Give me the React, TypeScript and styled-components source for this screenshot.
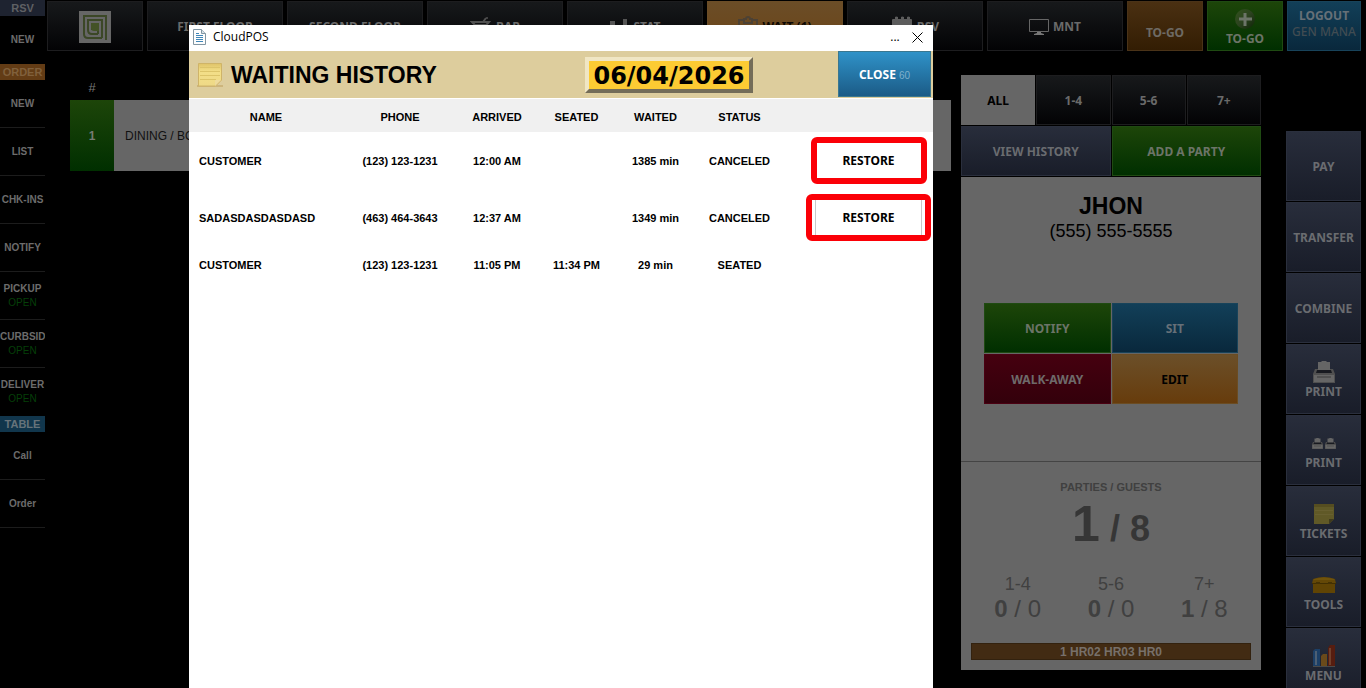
import React from "react";
import styled, { createGlobalStyle } from "styled-components";

const SANS = '"Liberation Sans", Arial, sans-serif';
const UI = '"Noto Sans", Tahoma, sans-serif';

type Tone = "black" | "slate" | "green" | "blue" | "brown" | "amber" | "red" | "plain" | "tan";

const tones: Record<Tone, { bg: string; border: string; color: string }> = {
  black: { bg: "linear-gradient(#17191b, #030305)", border: "#1d1d1f", color: "#6a6a6a" },
  slate: { bg: "linear-gradient(#282d3b, #191d29)", border: "#2a2f3d", color: "#6a6c70" },
  green: { bg: "linear-gradient(#1d4509, #002f00)", border: "#1f4a12", color: "#6c7468" },
  blue: { bg: "linear-gradient(#123f58, #09283c)", border: "#18435a", color: "#667078" },
  brown: { bg: "linear-gradient(#4a3012, #331d03)", border: "#4a3318", color: "#6e6a64" },
  tan: { bg: "linear-gradient(#6b4d27, #6b4417)", border: "#6b4d27", color: "#0c0804" },
  amber: { bg: "linear-gradient(#6b4f29, #673c0c)", border: "#6b4c22", color: "#000" },
  red: { bg: "linear-gradient(#45000f, #33000b)", border: "#4a0012", color: "#6e6a6a" },
  plain: { bg: "#666", border: "#666", color: "#000" },
};

const GlobalStyle = createGlobalStyle`
  *, *::before, *::after { box-sizing: border-box; }
  html, body { margin: 0; background: #000; overflow: hidden; }
  h1, h2, p { margin: 0; }
  button { font: inherit; cursor: pointer; padding: 0; }
`;

const Shell = styled.div`
  position: relative;
  display: flex;
  height: 100vh;
  overflow: hidden;
  background: #000;
  font-family: ${SANS};
`;

const LeftRail = styled.nav`
  flex: 0 0 45px;
  overflow: hidden;
  margin-right: 2px;
`;

const RailHeading = styled.h2<{ $bg: string; $color: string }>`
  height: 16px;
  background: ${(p) => p.$bg};
  color: ${(p) => p.$color};
  font: bold 11px/16px ${SANS};
  text-align: center;
`;

const RailItem = styled.button<{ $last: boolean }>`
  display: block;
  width: 100%;
  height: 48px;
  border: 0;
  border-bottom: 1px solid ${(p) => (p.$last ? "transparent" : "#1c1c1c")};
  background: none;
  color: #6c6c6c;
  font: bold 10px/14px ${SANS};
  text-align: center;
  white-space: nowrap;
`;

const RailStatus = styled.span`
  display: block;
  color: #053f08;
  font-weight: normal;
`;

const Workspace = styled.div`
  flex: 1;
  min-width: 0;
  padding: 1px 5px 0 0;
`;

const TopBar = styled.header`
  display: grid;
  grid-template-columns: 96px repeat(7, 1fr) 76px 76px 74px;
  grid-auto-rows: 50px;
  gap: 4px;
`;

const Tile = styled.button<{ $tone: Tone; $stack?: boolean }>`
  display: flex;
  flex-direction: ${(p) => (p.$stack ? "column" : "row")};
  align-items: center;
  justify-content: center;
  gap: ${(p) => (p.$stack ? "2px" : "4px")};
  min-width: 0;
  padding-top: 2px;
  border: 1px solid ${(p) => tones[p.$tone].border};
  background: ${(p) => tones[p.$tone].bg};
  color: ${(p) => tones[p.$tone].color};
  font: bold 12px/14px ${UI};
  white-space: nowrap;
`;

const LowTile = styled(Tile)`
  padding-top: 14px;
`;

const UserTile = styled(Tile)`
  padding: 0 0 4px;
`;

const UserName = styled.span`
  color: #414c52;
  font-weight: 500;
`;

const TileIcon = styled.span`
  display: grid;
  grid-auto-flow: column;
  place-content: center;
  gap: 2px;
  height: 22px;
`;

const Content = styled.div`
  display: flex;
  align-items: flex-start;
  padding-left: 23px;
`;

const WaitList = styled.table`
  flex: 1;
  border-collapse: collapse;
  margin: 24px 10px 0 0;
  font: 12px/16px ${SANS};

  th {
    height: 25px;
    padding: 0;
    color: #777;
    font-size: 13px;
    font-weight: normal;
  }
  td {
    height: 71px;
    padding: 0 11px;
    background: #666;
    color: #111;
  }
  td:first-child {
    width: 44px;
    padding: 0;
    background: linear-gradient(#1d4509, #002f00);
    color: #767c72;
    font-weight: bold;
    text-align: center;
  }
`;

const Panel = styled.section`
  flex: 0 0 300px;
  margin: 24px 25px 0 0;
`;

const PanelButtons = styled.div`
  display: grid;
  grid-template-columns: repeat(4, 1fr);
  grid-auto-rows: 50px;
  gap: 1px;
  margin-bottom: 1px;
`;

const WideTile = styled(Tile)`
  grid-column: span 2;
`;

const Card = styled.div`
  background: #666;
  text-align: center;
`;

const Party = styled.div`
  padding: 15px 23px 57px;
  border-bottom: 1px solid #444;
`;

const PartyName = styled.h2`
  font: bold 23px/28px ${SANS};
  color: #000;
`;

const PartyPhone = styled.p`
  font-size: 18px;
  line-height: 22px;
`;

const PartyActions = styled.div`
  display: grid;
  grid-template-columns: 1fr 1fr;
  grid-auto-rows: 50px;
  gap: 1px;
  margin-top: 61px;
`;

const Totals = styled.div`
  padding: 17px 10px 10px;
  color: #404040;
`;

const TotalsLabel = styled.p`
  font-size: 11px;
  font-weight: bold;
  line-height: 16px;
`;

const TotalsValue = styled.p`
  margin-top: 4px;
  font-size: 50px;
  font-weight: bold;
  line-height: 50px;
  color: #363636;

  span {
    font-size: 36px;
    line-height: 36px;
  }
`;

const Groups = styled.div`
  display: grid;
  grid-template-columns: repeat(3, 1fr);
  margin: 23px 0 21px;
`;

const GroupLabel = styled.p`
  font-size: 18px;
  line-height: 24px;
`;

const GroupValue = styled.p`
  font-size: 24px;
  line-height: 26px;
`;

const HoursBar = styled.p`
  height: 17px;
  border: 1px solid #33220f;
  background: #422b13;
  color: #77706a;
  font-size: 12px;
  font-weight: bold;
  line-height: 16px;
`;

const ActionRail = styled.nav`
  flex: 0 0 75px;
  display: grid;
  grid-auto-rows: 70px;
  gap: 1px;
  margin-top: 80px;
`;

const Overlay = styled.div`
  position: absolute;
  inset: 0;
  display: flex;
  padding: 25px 433px 0 189px;
`;

const Dialog = styled.section`
  flex: 1;
  min-width: 0;
  background: #fff;
  color: #000;
`;

const TitleBar = styled.div`
  display: flex;
  align-items: center;
  height: 26px;
  padding: 0 8px 2px 4px;
  font: 12px/24px "Open Sans", "Segoe UI", sans-serif;

  h1 {
    flex: 1;
    margin-left: 7px;
    font: inherit;
  }
`;

const WindowButton = styled.button`
  display: grid;
  place-items: center;
  width: 16px;
  height: 24px;
  margin-left: 6px;
  border: 0;
  background: none;
`;

const Banner = styled.div`
  display: flex;
  align-items: center;
  height: 47px;
  margin-bottom: 1px;
  padding: 0 2px 0 8px;
  background: #ddcd9d;
`;

const Heading = styled.h2`
  width: 354px;
  margin-left: 8px;
  padding-top: 1px;
  font: bold 23px/28px ${SANS};
`;

const DateButton = styled.button`
  width: 168px;
  height: 36px;
  padding-top: 2px;
  border: 4px solid;
  border-color: #f0e6c4 #746d58 #746d58 #f0e6c4;
  background: #fccb33;
  color: #000;
  font: bold 24px/26px "DejaVu Sans", Verdana, sans-serif;
  white-space: nowrap;
`;

const CloseButton = styled.button`
  width: 93px;
  height: 46px;
  margin: 0 0 1px auto;
  padding-top: 2px;
  border: 1px solid #3a7790;
  background: linear-gradient(#2f92c8, #1b5b86);
  color: #fff;
  font: bold 12px/16px ${UI};

  small {
    color: #7fb0cc;
    font: 10px/16px ${SANS};
  }
`;

const History = styled.table`
  width: 100%;
  table-layout: fixed;
  border-collapse: collapse;
  font: bold 11px/14px ${SANS};
  text-align: center;

  th, td { padding: 0; }
  th {
    height: 33px;
    padding-top: 2px;
    background: #f0f0f0;
  }
  td:first-child {
    padding-left: 10px;
    text-align: left;
  }
  td:last-child { padding-left: 20px; }
`;

const HistoryRow = styled.tr<{ $tall: boolean }>`
  height: ${(p) => (p.$tall ? 57 : 37)}px;
`;

const Highlight = styled.div<{ $wide: boolean }>`
  display: flex;
  justify-content: center;
  width: ${(p) => (p.$wide ? 125 : 116)}px;
  height: 47px;
  margin: 0 auto;
  border: 6px solid #fb0007;
  border-radius: 6px;
  background: #fff;
`;

const RestoreButton = styled.button<{ $edged: boolean }>`
  width: 107px;
  padding-top: 1px;
  border: solid ${(p) => (p.$edged ? "#c8c8c8" : "transparent")};
  border-width: 0 1px;
  background: #fff;
  color: #000;
  font: bold 12px/14px ${UI};
`;

const SpiralLogo = () => (
  <svg width="32" height="32" viewBox="0 0 32 32" aria-hidden="true">
    <path fill="#666" d="M0 0h32v32H0z" />
    <g fill="none" stroke="#3b4726" strokeWidth="2">
      <path d="M27 29V5H5v18q0 4 4 4h14" />
      <path d="M23 27V9H9v10q0 4 4 4h6" />
      <path d="M19 23V13h-6v6" />
    </g>
    <path fill="#435226" d="M12 12h8v8h-5q-3 0-3-3z" />
  </svg>
);

const CocktailIcon = () => (
  <svg width="22" height="22" viewBox="0 0 22 22" aria-hidden="true" fill="none" stroke="#505050" strokeWidth="2">
    <path d="M2 6h17l-8 9zM10 14v7M6 21h9" />
    <path d="M5 9h11M13 6l3-4" />
    <circle cx="17" cy="2" r="1" fill="#505050" stroke="none" />
  </svg>
);

const BarsIcon = () => (
  <svg width="20" height="20" viewBox="0 0 20 20" aria-hidden="true" fill="#555">
    <path d="M1 4h5v15H1zM8 8h4v11H8zM14 2h4v17h-4z" />
  </svg>
);

const ClipboardIcon = () => (
  <svg width="20" height="22" viewBox="0 0 20 22" aria-hidden="true" fill="none" stroke="#4c4134" strokeWidth="2">
    <path d="M6 4H1v17h18V4h-5M6 3h2a2 2 0 0 1 4 0h2v4H6zM6 13l3 3 5-6" />
  </svg>
);

const CalendarIcon = () => (
  <svg width="22" height="22" viewBox="0 0 22 22" aria-hidden="true" fill="#5c5c5c">
    <path d="M1 4q0-1 1-1h2V1q1-1 3 0v2h3V1q1-1 3 0v2h3V1q1-1 3 0v2h1q1 0 1 1v5H1zM1 10h20v12H1z" />
  </svg>
);

const MonitorIcon = () => (
  <svg width="20" height="16" viewBox="0 0 20 16" aria-hidden="true">
    <path fill="none" stroke="#666" d="M.5.5h19v12H.5z" />
    <path fill="#777" d="M8 13h4v1l3 1v1H5v-1l3-1z" />
  </svg>
);

const PlusIcon = () => (
  <svg width="20" height="20" viewBox="0 0 20 20" aria-hidden="true">
    <defs>
      <linearGradient id="plusBall" x2="1" y2="1">
        <stop offset="0" stopColor="#31521c" />
        <stop offset=".5" stopColor="#2c421f" />
        <stop offset="1" stopColor="#0e2406" />
      </linearGradient>
    </defs>
    <circle cx="10" cy="10" r="10" fill="url(#plusBall)" />
    <path stroke="#6c7468" strokeWidth="3" d="M10 4v13M4 10h13" />
  </svg>
);

const PrinterIcon = ({ size = 22 }: { size?: number }) => (
  <svg width={size} height={size} viewBox="0 0 22 22" aria-hidden="true">
    <path fill="#656565" d="M5 1h3l1-1h4l1 1h3v9H5z" />
    <path fill="#505050" d="M2 8h3v2h12V8h3l2 5v9H0v-9z" />
    <path fill="#181a20" d="M4 9h14l1 3H3z" />
    <path fill="#666" d="M1 14h20v7H1z" />
    <path fill="#505050" d="M4 15h14v2H4z" />
  </svg>
);

const NoteIcon = () => (
  <svg width="26" height="26" viewBox="0 0 26 26" aria-hidden="true">
    <defs>
      <linearGradient id="notePaper" x2="0" y2="1">
        <stop offset="0" stopColor="#dfc368" />
        <stop offset=".35" stopColor="#f3df88" />
        <stop offset="1" stopColor="#eed987" />
      </linearGradient>
    </defs>
    <path fill="#cdb57c" d="M0 23h26v2H0z" />
    <path fill="url(#notePaper)" stroke="#cfb468" d="M1.500 1.500h23V18l-6 6h-17z" />
    <path fill="none" stroke="#dcc46a" d="M3 5.500h20M3 9.500h20M3 13.500h20M3 17.500h16" />
    <path fill="#d8bb76" d="M18 25v-7h7z" />
    <path fill="#eedb9c" d="M18 24v-6h6z" />
  </svg>
);

const TicketIcon = () => (
  <svg width="20" height="20" viewBox="0 0 20 20" aria-hidden="true">
    <path fill="#605927" d="M0 0h20v15l-5 5H0z" />
    <path fill="#554d20" d="M0 0h20v3H0z" />
    <path fill="none" stroke="#686030" d="M1 6.500h18M1 10.500h18" />
    <path fill="#3f3a1c" d="M15 20v-5h5z" />
  </svg>
);

const ToolboxIcon = () => (
  <svg width="24" height="16" viewBox="0 0 24 16" aria-hidden="true">
    <path fill="#644807" d="M1 2q11-4 22 0l1 5H0z" />
    <path fill="#70530b" d="M2 2q10-3 20 0v1H2z" />
    <path fill="#604404" d="M1 7h22v9H1z" />
    <path stroke="#412f02" d="M0 6.500h24" />
    <path fill="#453204" d="M4 5h4v2H4zM16 5h4v2h-4z" />
  </svg>
);

const ChartIcon = () => (
  <svg width="22" height="22" viewBox="0 0 22 22" aria-hidden="true">
    <path fill="#1c3f66" d="M0 6l2-2h5v17H0z" />
    <path fill="#4d5f73" d="M2 6h2v14H2z" />
    <path fill="#6a4a1a" d="M8 11l2-2h4v12H8z" />
    <path fill="#561d10" d="M15 3l2-3h5v21h-7z" />
    <path fill="#70402c" d="M16 3h2v17h-2z" />
    <path fill="#4a4a4a" d="M0 21h22v1H0z" />
  </svg>
);

const DocumentIcon = () => (
  <svg width="13" height="16" viewBox="0 0 13 16" aria-hidden="true">
    <path fill="#fdfdfd" stroke="#8296a3" d="M.5.5h8l4 4v11H.5z" />
    <path fill="#d7e1e7" stroke="#8296a3" d="M8.500.5v4h4" />
    <path stroke="#3f86b8" d="M3 4.500h3M3 6.500h7M3 8.500h7M3 10.500h7M3 12.500h7" />
  </svg>
);

const CrossIcon = () => (
  <svg width="11" height="11" viewBox="0 0 11 11" aria-hidden="true">
    <path stroke="#000" d="M.5.5l10 10M10.500.5l-10 10" />
  </svg>
);

const railGroups = [
  { title: "RSV", bg: "#1e2330", color: "#5f6064", items: [["NEW"]] },
  {
    title: "ORDER",
    bg: "#633c15",
    color: "#80603c",
    items: [["NEW"], ["LIST"], ["CHK-INS"], ["NOTIFY"], ["PICKUP", "OPEN"], ["CURBSID", "OPEN"], ["DELIVER", "OPEN"]],
  },
  { title: "TABLE", bg: "#11364c", color: "#66737a", items: [["Call"], ["Order"]] },
];

const columns = ["NAME", "PHONE", "ARRIVED", "SEATED", "WAITED", "STATUS", ""];
const columnWidths = [154, 114, 80, 79, 79, 89];

const history = [
  { name: "CUSTOMER", phone: "(123) 123-1231", arrived: "12:00 AM", seated: "", waited: "1385 min", status: "CANCELED" },
  { name: "SADASDASDASDASD", phone: "(463) 464-3643", arrived: "12:37 AM", seated: "", waited: "1349 min", status: "CANCELED" },
  { name: "CUSTOMER", phone: "(123) 123-1231", arrived: "11:05 PM", seated: "11:34 PM", waited: "29 min", status: "SEATED" },
];

const groups = [
  ["1-4", "0", "0"],
  ["5-6", "0", "0"],
  ["7+", "1", "8"],
];

export default function App() {
  return (
    <>
      <GlobalStyle />
      <Shell>
        <LeftRail aria-label="Shortcuts">
          {railGroups.map((group) => (
            <React.Fragment key={group.title}>
              <RailHeading $bg={group.bg} $color={group.color}>
                {group.title}
              </RailHeading>
              {group.items.map(([label, status], i) => (
                <RailItem key={label} $last={group.title !== "TABLE" && i === group.items.length - 1}>
                  {label}
                  {status && <RailStatus>{status}</RailStatus>}
                </RailItem>
              ))}
            </React.Fragment>
          ))}
        </LeftRail>

        <Workspace>
          <TopBar>
            <Tile $tone="black" aria-label="Home"><SpiralLogo /></Tile>
            <Tile $tone="black">FIRST FLOOR</Tile>
            <Tile $tone="black">SECOND FLOOR</Tile>
            <Tile $tone="black"><CocktailIcon />BAR</Tile>
            <Tile $tone="black"><BarsIcon />STAT</Tile>
            <Tile $tone="tan"><ClipboardIcon />WAIT (1)</Tile>
            <Tile $tone="black"><CalendarIcon />RSV</Tile>
            <Tile $tone="black"><MonitorIcon />MNT</Tile>
            <LowTile $tone="brown">TO-GO</LowTile>
            <Tile $tone="green" $stack><TileIcon><PlusIcon /></TileIcon>TO-GO</Tile>
            <UserTile $tone="blue" $stack>LOGOUT<UserName>GEN MANA</UserName></UserTile>
          </TopBar>

          <Content>
            <WaitList>
              <thead>
                <tr><th scope="col">#</th><th aria-label="Area" /></tr>
              </thead>
              <tbody>
                <tr><td>1</td><td>DINING / BOOTH</td></tr>
              </tbody>
            </WaitList>

            <Panel>
              <PanelButtons>
                <Tile $tone="plain">ALL</Tile>
                <Tile $tone="black">1-4</Tile>
                <Tile $tone="black">5-6</Tile>
                <Tile $tone="black">7+</Tile>
                <WideTile $tone="slate">VIEW HISTORY</WideTile>
                <WideTile $tone="green">ADD A PARTY</WideTile>
              </PanelButtons>
              <Card>
                <Party>
                  <PartyName>JHON</PartyName>
                  <PartyPhone>(555) 555-5555</PartyPhone>
                  <PartyActions>
                    <Tile $tone="green">NOTIFY</Tile>
                    <Tile $tone="blue">SIT</Tile>
                    <Tile $tone="red">WALK-AWAY</Tile>
                    <Tile $tone="amber">EDIT</Tile>
                  </PartyActions>
                </Party>
                <Totals>
                  <TotalsLabel>PARTIES / GUESTS</TotalsLabel>
                  <TotalsValue>1<span> / 8</span></TotalsValue>
                  <Groups>
                    {groups.map(([label, parties, guests]) => (
                      <div key={label}>
                        <GroupLabel>{label}</GroupLabel>
                        <GroupValue><b>{parties}</b> / {guests}</GroupValue>
                      </div>
                    ))}
                  </Groups>
                  <HoursBar>1 HR02 HR03 HR0</HoursBar>
                </Totals>
              </Card>
            </Panel>

            <ActionRail aria-label="Check actions">
              <Tile $tone="slate">PAY</Tile>
              <Tile $tone="slate">TRANSFER</Tile>
              <Tile $tone="slate">COMBINE</Tile>
              <Tile $tone="slate" $stack><TileIcon><PrinterIcon /></TileIcon>PRINT</Tile>
              <Tile $tone="slate" $stack>
                <TileIcon><PrinterIcon size={11} /><PrinterIcon size={11} /></TileIcon>
                PRINT
              </Tile>
              <Tile $tone="slate" $stack><TileIcon><TicketIcon /></TileIcon>TICKETS</Tile>
              <Tile $tone="slate" $stack><TileIcon><ToolboxIcon /></TileIcon>TOOLS</Tile>
              <Tile $tone="slate" $stack><TileIcon><ChartIcon /></TileIcon>MENU</Tile>
            </ActionRail>
          </Content>
        </Workspace>

        <Overlay>
          <Dialog role="dialog" aria-label="CloudPOS">
            <TitleBar>
              <DocumentIcon />
              <h1>CloudPOS</h1>
              <WindowButton aria-label="More">...</WindowButton>
              <WindowButton aria-label="Close window"><CrossIcon /></WindowButton>
            </TitleBar>
            <Banner>
              <NoteIcon />
              <Heading>WAITING HISTORY</Heading>
              <DateButton>06/04/2026</DateButton>
              <CloseButton>CLOSE <small>60</small></CloseButton>
            </Banner>
            <History>
              <colgroup>
                {columnWidths.map((width, i) => <col key={i} width={width} />)}
                <col />
              </colgroup>
              <thead>
                <tr>{columns.map((label) => <th key={label} scope="col">{label}</th>)}</tr>
              </thead>
              <tbody>
                {history.map((row, i) => {
                  const canceled = row.status === "CANCELED";
                  return (
                    <HistoryRow key={i} $tall={canceled}>
                      <td>{row.name}</td>
                      <td>{row.phone}</td>
                      <td>{row.arrived}</td>
                      <td>{row.seated}</td>
                      <td>{row.waited}</td>
                      <td>{row.status}</td>
                      <td>
                        {canceled && (
                          <Highlight $wide={i === 1}>
                            <RestoreButton $edged={i === 1}>RESTORE</RestoreButton>
                          </Highlight>
                        )}
                      </td>
                    </HistoryRow>
                  );
                })}
              </tbody>
            </History>
          </Dialog>
        </Overlay>
      </Shell>
    </>
  );
}
